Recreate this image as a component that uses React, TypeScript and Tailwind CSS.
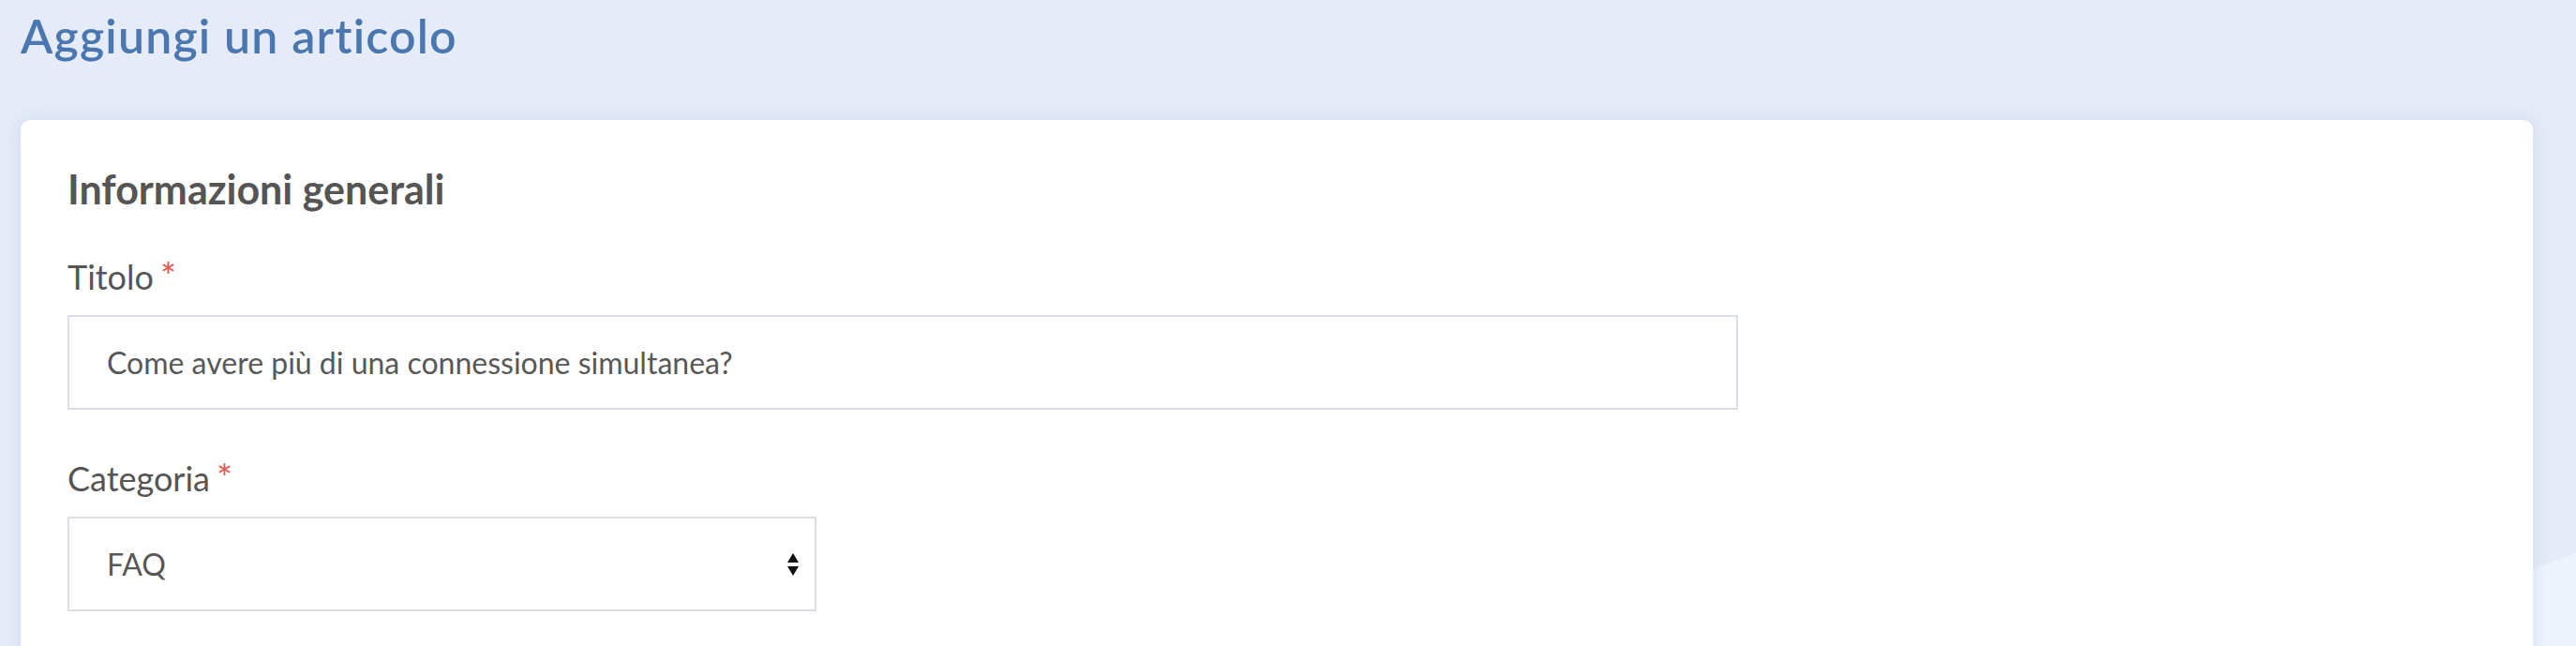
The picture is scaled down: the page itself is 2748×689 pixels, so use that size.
import React from 'react';

const Required: React.FC = () => (
  <span className="ml-[7px] inline-block h-[36px] align-top text-[40px] leading-[36px] text-[#e0584f]">*</span>
);

const App: React.FC = () => {
  return (
    <div className="relative min-h-[689px] overflow-hidden bg-[#e5ebf7] font-['Lato',sans-serif]">
      {/* decorative background wave */}
      <svg className="pointer-events-none absolute inset-0 h-full w-full" preserveAspectRatio="none" viewBox="0 0 2748 689">
        <path d="M2282 689 L2748 526 L2748 689 Z" fill="#eef2fc" />
      </svg>

      <div className="relative pl-[22px] pr-[46px] pt-[13px]">
        <h1 className="text-[50px] leading-[50px] font-semibold tracking-[1.2px] text-[#4a77b0]">Aggiungi un articolo</h1>

        <div className="mt-[65px] rounded-[10px] bg-white pl-[50px] pr-[50px] pt-[52px] pb-[120px] shadow-[0_0_18px_rgba(170,185,225,0.35)]">
          <h2 className="text-[43px] leading-[43px] font-bold text-[#555555]">Informazioni generali</h2>

          <label className="mt-[54px] block h-[36px] text-[36px] leading-[36px] text-[#555555]">
            Titolo
            <Required />
          </label>
          <input
            type="text"
            defaultValue="Come avere più di una connessione simultanea?"
            className="mt-[23px] block h-[101px] w-[1782px] border-2 border-[#dadfe7] bg-white px-[40px] text-[32px] text-[#585858] outline-none"
          />

          <label className="mt-[55px] block h-[36px] text-[36px] leading-[36px] text-[#555555]">
            Categoria
            <Required />
          </label>
          <div className="relative mt-[23px] flex h-[101px] w-[799px] items-center border-2 border-[#dadfe7] bg-white px-[40px] text-[32px] text-[#585858]">
            <span>FAQ</span>
            <svg className="pointer-events-none absolute right-[17px] top-[37px]" width="12" height="25" viewBox="0 0 12 25">
              <path d="M6 0 L12 10 L0 10 Z" fill="#111" />
              <path d="M0 14 L12 14 L6 24 Z" fill="#111" />
            </svg>
          </div>
        </div>
      </div>
    </div>
  );
};

export default App;
